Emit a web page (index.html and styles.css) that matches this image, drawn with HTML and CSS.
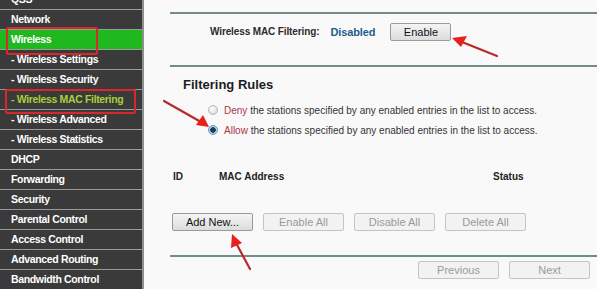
FILE: index.html
```html
<!DOCTYPE html>
<html>
<head>
<meta charset="utf-8">
<link rel="stylesheet" href="styles.css">
</head>
<body>
<div class="page">
  <nav class="sidebar">
    <ul class="menu">
      <li class="item">QSS</li>
      <li class="item">Network</li>
      <li class="item active"><span class="mark mark-wireless">Wireless</span></li>
      <li class="item sub">- Wireless Settings</li>
      <li class="item sub">- Wireless Security</li>
      <li class="item sub current"><span class="mark mark-mac">- Wireless MAC Filtering</span></li>
      <li class="item sub">- Wireless Advanced</li>
      <li class="item sub">- Wireless Statistics</li>
      <li class="item">DHCP</li>
      <li class="item">Forwarding</li>
      <li class="item">Security</li>
      <li class="item">Parental Control</li>
      <li class="item">Access Control</li>
      <li class="item">Advanced Routing</li>
      <li class="item">Bandwidth Control</li>
    </ul>
  </nav>
  <main class="main">
    <div class="status-row">
      <span class="label">Wireless MAC Filtering:</span>
      <span class="state">Disabled</span>
      <button class="btn btn-enable">Enable</button>
    </div>
    <section class="rules">
      <h2 class="title">Filtering Rules</h2>
      <label class="radio-row first"><span class="radio"></span><span class="kw">Deny</span>&nbsp;the stations specified by any enabled entries in the list to access.</label>
      <label class="radio-row"><span class="radio checked"></span><span class="kw">Allow</span>&nbsp;the stations specified by any enabled entries in the list to access.</label>
    </section>
    <div class="table-head">
      <span class="col-id">ID</span>
      <span class="col-mac">MAC Address</span>
      <span class="col-status">Status</span>
    </div>
    <div class="actions">
      <button class="btn">Add New...</button>
      <button class="btn disabled">Enable All</button>
      <button class="btn disabled">Disable All</button>
      <button class="btn disabled">Delete All</button>
    </div>
    <div class="pager">
      <button class="btn disabled">Previous</button>
      <button class="btn disabled">Next</button>
    </div>
  </main>
  <svg class="arrows" width="597" height="289" viewBox="0 0 597 289">
    <g stroke="#b82a2a" stroke-width="2.2" stroke-linecap="round" fill="none">
      <line x1="497" y1="56" x2="462" y2="42"/>
      <line x1="164" y1="101" x2="201" y2="122"/>
      <line x1="250" y1="269" x2="236" y2="243"/>
    </g>
    <g fill="#e8201e">
      <polygon points="452,38 467,36 461,47"/>
      <polygon points="209,127 196,125 203,115"/>
      <polygon points="232,234 231,248 242,243"/>
    </g>
  </svg>
</div>
</body>
</html>
```
FILE: styles.css
```css
* { box-sizing: border-box; }
html, body { margin: 0; padding: 0; }
body {
  width: 597px;
  height: 289px;
  overflow: hidden;
  background: #f9f9f9;
  font-family: "Liberation Sans", Arial, sans-serif;
}
.page {
  position: relative;
  display: flex;
  width: 597px;
  height: 289px;
  overflow: hidden;
}
.sidebar {
  width: 144px;
  flex: none;
  background: #3a3a3a;
  border-right: 2px solid #8e8e8e;
  overflow: hidden;
}
.menu {
  list-style: none;
  margin: -10px 0 0 0;
  padding: 0;
}
.item {
  height: 20px;
  line-height: 19px;
  border-bottom: 1px solid #9a9a9a;
  color: #ffffff;
  font-weight: bold;
  font-size: 10.5px;
  letter-spacing: -0.35px;
  padding-left: 11px;
  white-space: nowrap;
  position: relative;
}
.item.active { background: #1fb81f; }
.item.current { color: #a9cf3c; }
.mark {
  display: inline-block;
}
.mark-wireless::after,
.mark-mac::after {
  content: "";
  position: absolute;
  border: 2px solid #d8282c;
  border-radius: 2px;
}
.mark-wireless::after { left: 6px; top: -3px; width: 88px; height: 24px; }
.mark-mac::after { left: 5px; top: -1px; width: 127px; height: 21px; }

.main {
  flex: 1;
  padding: 12px 0 0 26px;
  color: #222;
  font-size: 11px;
}
.status-row {
  border-top: 2px solid #6f8f82;
  border-bottom: 2px solid #6f8f82;
  height: 55px;
  display: flex;
  align-items: center;
  padding: 0 0 16px 40px;
}
.label { font-weight: bold; color: #2c2c2c; font-size: 10px; letter-spacing: -0.12px; }
.state { font-weight: bold; color: #1e5d8c; margin-left: 11px; font-size: 11px; letter-spacing: -0.1px; }
.btn {
  font-family: "Liberation Sans", Arial, sans-serif;
  font-size: 11px;
  height: 18px;
  width: 81px;
  padding: 0;
  border: 1px solid #9a9a9a;
  border-radius: 2px;
  background: linear-gradient(#f4f4f4, #dcdcdc);
  color: #111;
}
.btn.disabled {
  color: #9a9a9a;
  border-color: #c4c4c4;
  background: #f2f2f2;
}
.btn-enable { width: 61px; margin-left: 15px; }
.rules { padding: 10px 0 0 13px; }
.title {
  margin: 0;
  font-size: 13px;
  font-weight: bold;
  color: #1c1c1c;
  line-height: 16px;
}
.radio-row {
  display: flex;
  align-items: center;
  height: 20px;
  margin-left: 25px;
  font-size: 10px;
  color: #333;
  white-space: nowrap;
}
.radio-row.first { margin-top: 7px; }
.radio {
  width: 10px;
  height: 10px;
  border-radius: 50%;
  border: 1px solid #b8b8b8;
  background: radial-gradient(circle at 40% 35%, #ffffff, #d0d0d0);
  margin-right: 6px;
  flex: none;
}
.radio.checked {
  border-color: #5d9cc8;
  background: radial-gradient(circle, #1d3d48 0 2.5px, #9fcbe6 3px, #d8ecf8 5px);
}
.kw { color: #a83848; }
.table-head {
  position: relative;
  height: 16px;
  margin-top: 31px;
  font-weight: bold;
  font-size: 10px;
  color: #222;
}
.table-head span { position: absolute; top: 0; }
.col-id { left: 3px; }
.col-mac { left: 49px; }
.col-status { left: 323px; }
.actions {
  display: flex;
  gap: 10px;
  margin-top: 26px;
  padding-left: 2px;
  height: 44px;
  border-bottom: 2px solid #6f8f82;
}
.pager {
  display: flex;
  justify-content: flex-end;
  gap: 10px;
  padding-right: 7px;
  margin-top: 4px;
}
.arrows {
  position: absolute;
  left: 0;
  top: 0;
  pointer-events: none;
}
```
